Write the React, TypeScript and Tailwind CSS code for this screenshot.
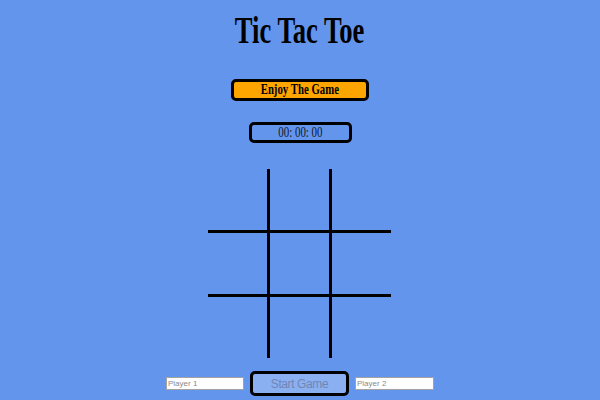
import React from 'react';

const cells = Array.from({ length: 9 }, (_, i) => i);

export default function App() {
  return (
    <div className="w-[600px] h-[400px] overflow-hidden bg-[#6495ED] flex flex-col items-center">
      {/* Title */}
      <h1 className="mt-[11px] h-[38px] text-[38px] leading-none font-bold text-black font-['Liberation_Serif',serif] scale-x-[0.7] whitespace-nowrap">
        Tic Tac Toe
      </h1>

      {/* Banner */}
      <div className="mt-[30px] w-[138px] h-[22px] bg-[#FFA500] border-[3px] border-black rounded-[5px] flex items-center justify-center">
        <span className="text-[14px] leading-none font-bold text-black font-['Liberation_Serif',serif] scale-x-[0.77] whitespace-nowrap">
          Enjoy The Game
        </span>
      </div>

      {/* Timer */}
      <div className="mt-[21px] w-[103px] h-[21px] border-[3px] border-black rounded-[5px] flex items-center justify-center">
        <span className="text-[14px] leading-none text-[#111827] font-['Liberation_Serif',serif] scale-x-[0.78] whitespace-nowrap">
          00: 00: 00
        </span>
      </div>

      {/* Board */}
      <div className="mt-[26px] mr-[1px] grid grid-cols-[59px_59px_59px] grid-rows-[61px_61px_61px] gap-[3px] bg-black">
        {cells.map((i) => (
          <div key={i} className="bg-[#6495ED]" />
        ))}
      </div>

      {/* Controls */}
      <div className="mt-[13px] flex items-center gap-[6px] font-['Liberation_Sans_Narrow','Liberation_Sans',Arial,sans-serif]">
        <input
          placeholder="Player 1"
          className="w-[78px] h-[13px] bg-white border border-[#a3a3a3] px-[1px] text-[8px] text-[#555] placeholder:text-[#8a8a8a] outline-none"
        />
        <button
          disabled
          className="w-[99px] h-[25px] bg-[#8bb0f2] border-[3px] border-black rounded-[5px] text-[12px] leading-none text-[#7185b4] font-['Liberation_Sans',Arial,sans-serif] tracking-[-0.4px]"
        >
          Start Game
        </button>
        <input
          placeholder="Player 2"
          className="w-[79px] h-[13px] bg-white border border-[#a3a3a3] px-[1px] text-[8px] text-[#555] placeholder:text-[#8a8a8a] outline-none"
        />
      </div>
    </div>
  );
}
